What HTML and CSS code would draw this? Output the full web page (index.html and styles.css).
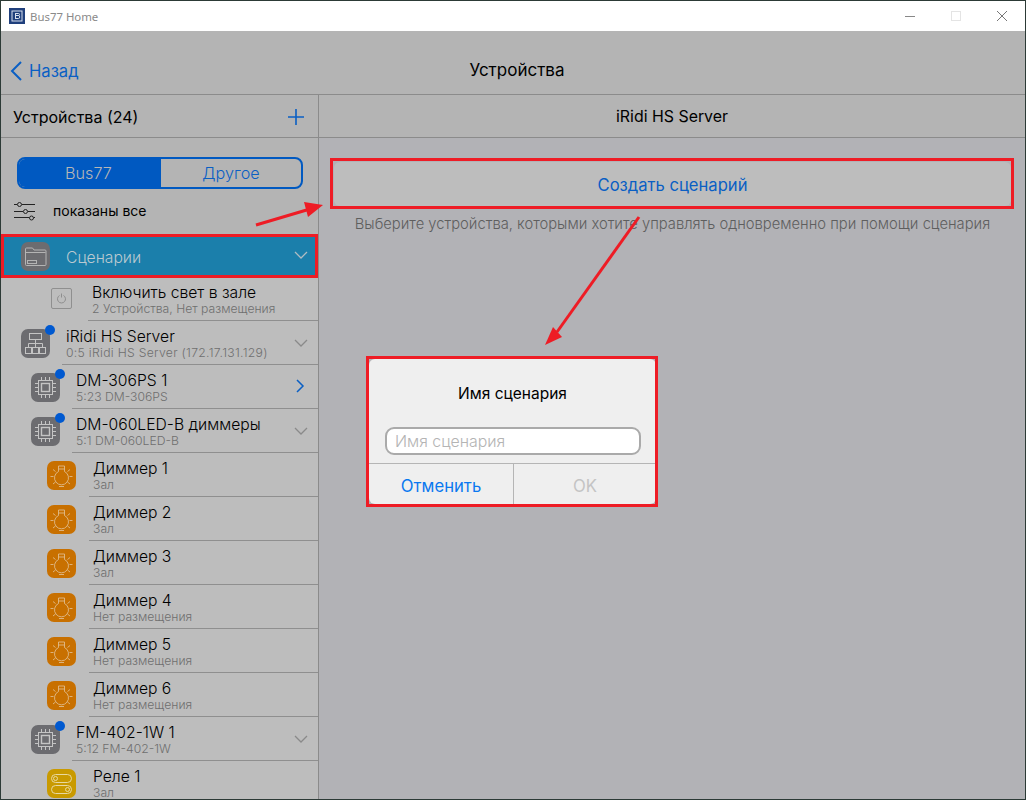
FILE: index.html
```html
<!DOCTYPE html>
<html lang="ru">
<head>
<meta charset="utf-8">
<title>Bus77 Home</title>
<link rel="stylesheet" href="styles.css">
</head>
<body>
<svg class="defs" width="0" height="0">
  <symbol id="i-chip" viewBox="0 0 29 29">
    <rect width="29" height="29" rx="7" fill="#6c6c70"/>
    <g fill="none" stroke="#c4c4c4">
      <rect x="7.500" y="7.500" width="14" height="14"/>
      <rect x="10.500" y="10.500" width="8" height="8" stroke-width="1.400"/>
      <path d="M10.500 4v3M14.500 4v3M18.500 4v3M10.500 22v3M14.500 22v3M18.500 22v3M4 10.500h3M4 14.500h3M4 18.500h3M22 10.500h3M22 14.500h3M22 18.500h3"/>
    </g>
  </symbol>
  <symbol id="i-net" viewBox="0 0 29 29">
    <rect width="29" height="29" rx="7" fill="#6c6c70"/>
    <g fill="none" stroke="#c4c4c4">
      <rect x="8.500" y="4.500" width="12" height="6"/>
      <rect x="4.500" y="18.500" width="6" height="6"/>
      <rect x="11.500" y="18.500" width="6" height="6"/>
      <rect x="18.500" y="18.500" width="6" height="6"/>
      <path d="M14.500 10.500v8M7.500 18.500v-4h14v4"/>
    </g>
  </symbol>
  <symbol id="i-folder" viewBox="0 0 29 29">
    <rect width="29" height="29" rx="7" fill="#6c6c70"/>
    <g fill="none" stroke="#b4b4b4">
      <path d="M4.500 22.500v-15.500q0-1 1-1h6l1.500 2h11q1 0 1 1v13.500q0 1-1 1h-18.500q-1 0-1-1z"/>
      <path d="M4.500 10.500h20"/>
      <rect x="6.500" y="18.500" width="9" height="3"/>
    </g>
  </symbol>
  <symbol id="i-bulb" viewBox="0 0 29 29">
    <rect width="29" height="29" rx="7" fill="#c87000"/>
    <g fill="none" stroke="#e2c49c" stroke-width="0.800">
      <path d="M11.500 10.500a7 7 0 1 0 6 0L17.500 5h-6z"/>
      <path d="M11.500 8h6M3.500 15.500h3M22.500 15.500h3M6 8.500l2.500 2M23 8.500l-2.500 2M6 23l2.500-2M23 23l-2.500-2M12 25.500h5"/>
    </g>
  </symbol>
  <symbol id="i-relay" viewBox="0 0 29 29">
    <rect width="29" height="29" rx="7" fill="#c99a00"/>
    <g fill="none" stroke="#e8d9a0">
      <rect x="4.500" y="5.500" width="20" height="8" rx="4"/>
      <rect x="4.500" y="16.500" width="20" height="8" rx="4"/>
      <circle cx="8.500" cy="9.500" r="2"/>
      <circle cx="20.500" cy="20.500" r="2"/>
    </g>
  </symbol>
  <symbol id="i-down" viewBox="0 0 14 8">
    <path d="M1 1l6 6 6-6" fill="none" stroke="currentColor" stroke-width="1.300"/>
  </symbol>
</svg>

<div class="window">
  <header class="titlebar">
    <svg class="app-icon" width="16" height="16" viewBox="0 0 16 16">
      <rect width="16" height="16" fill="#1f3f7c"/>
      <rect x="3" y="3" width="10" height="10" fill="none" stroke="#d8e0ee"/>
      <path d="M6.500 5.500h3q1 0 1 1t-1 1h-3zM6.500 7.500h3q1.200 0 1.200 1.500t-1.200 1.500h-3zM6.500 5v6" fill="none" stroke="#d8e0ee"/>
    </svg>
    <span class="app-name">Bus77 Home</span>
    <div class="win-controls">
      <span class="win-btn"><svg width="12" height="12" viewBox="0 0 12 12"><path d="M1 6.500h10" stroke="#888"/></svg></span>
      <span class="win-btn"><svg width="12" height="12" viewBox="0 0 12 12"><rect x="1.500" y="1.500" width="9" height="9" fill="none" stroke="#e4e4e4"/></svg></span>
      <span class="win-btn"><svg width="12" height="12" viewBox="0 0 12 12"><path d="M1 1l10 10M11 1L1 11" stroke="#777"/></svg></span>
    </div>
  </header>

  <nav class="navbar">
    <a class="back">
      <svg width="12" height="20" viewBox="0 0 12 20"><path d="M11 1L2 10l9 9" fill="none" stroke="#0a5fc4" stroke-width="2"/></svg>
      <span>Назад</span>
    </a>
    <div class="nav-title">Устройства</div>
  </nav>

  <div class="split">
    <aside class="sidebar">
      <div class="side-head">
        <span>Устройства (24)</span>
        <svg width="16" height="16" viewBox="0 0 16 16"><path d="M8 0v16M0 8h16" stroke="#0a5fc4" stroke-width="1.600"/></svg>
      </div>
      <div class="segmented">
        <div class="seg seg-on">Bus77</div>
        <div class="seg">Другое</div>
      </div>
      <div class="filter">
        <svg width="22" height="20" viewBox="0 0 22 20">
          <g fill="none" stroke="#222">
            <path d="M0 3.500h3M8 3.500h13M0 10.500h9M14 10.500h7M0 16.500h15M20 16.500h1"/>
            <circle cx="5.500" cy="3.500" r="2"/><circle cx="11.500" cy="10.500" r="2"/><circle cx="17.500" cy="17" r="2"/>
          </g>
        </svg>
        <span>показаны все</span>
      </div>
      <div class="list">
        <div class="row row-folder">
          <svg class="ic"><use href="#i-folder"/></svg>
          <div class="row-body"><div class="name">Сценарии</div></div>
          <svg class="chev"><use href="#i-down"/></svg>
        </div>
        <div class="row lvl-scene">
          <span class="power"><svg width="11" height="11" viewBox="0 0 11 11"><path d="M3.500 2.500a4 4 0 1 0 4 0M5.500 0.500v4" fill="none" stroke="#8e8e8e"/></svg></span>
          <div class="row-body"><div class="name">Включить свет в зале</div><div class="sub">2 Устройства, Нет размещения</div></div>
        </div>
        <div class="row lvl-0">
          <span class="ic-wrap"><svg class="ic"><use href="#i-net"/></svg><i class="dot"></i></span>
          <div class="row-body"><div class="name">iRidi HS Server</div><div class="sub sub-wide">0:5 iRidi HS Server (172.17.131.129)</div></div>
          <svg class="chev"><use href="#i-down"/></svg>
        </div>
        <div class="row lvl-1">
          <span class="ic-wrap"><svg class="ic"><use href="#i-chip"/></svg><i class="dot"></i></span>
          <div class="row-body"><div class="name">DM-306PS 1</div><div class="sub">5:23 DM-306PS</div></div>
          <svg class="chev-right" width="9" height="14" viewBox="0 0 9 14"><path d="M1 1l6 6-6 6" fill="none" stroke="#0a5fc4" stroke-width="1.500"/></svg>
        </div>
        <div class="row lvl-1">
          <span class="ic-wrap"><svg class="ic"><use href="#i-chip"/></svg><i class="dot"></i></span>
          <div class="row-body"><div class="name">DM-060LED-B диммеры</div><div class="sub">5:1 DM-060LED-B</div></div>
          <svg class="chev"><use href="#i-down"/></svg>
        </div>
        <div class="row lvl-2"><svg class="ic"><use href="#i-bulb"/></svg><div class="row-body"><div class="name">Диммер 1</div><div class="sub">Зал</div></div></div>
        <div class="row lvl-2"><svg class="ic"><use href="#i-bulb"/></svg><div class="row-body"><div class="name">Диммер 2</div><div class="sub">Зал</div></div></div>
        <div class="row lvl-2"><svg class="ic"><use href="#i-bulb"/></svg><div class="row-body"><div class="name">Диммер 3</div><div class="sub">Зал</div></div></div>
        <div class="row lvl-2"><svg class="ic"><use href="#i-bulb"/></svg><div class="row-body"><div class="name">Диммер 4</div><div class="sub">Нет размещения</div></div></div>
        <div class="row lvl-2"><svg class="ic"><use href="#i-bulb"/></svg><div class="row-body"><div class="name">Диммер 5</div><div class="sub">Нет размещения</div></div></div>
        <div class="row lvl-2"><svg class="ic"><use href="#i-bulb"/></svg><div class="row-body"><div class="name">Диммер 6</div><div class="sub">Нет размещения</div></div></div>
        <div class="row lvl-1">
          <span class="ic-wrap"><svg class="ic"><use href="#i-chip"/></svg><i class="dot"></i></span>
          <div class="row-body"><div class="name">FM-402-1W 1</div><div class="sub">5:12 FM-402-1W</div></div>
          <svg class="chev"><use href="#i-down"/></svg>
        </div>
        <div class="row lvl-2"><svg class="ic"><use href="#i-relay"/></svg><div class="row-body"><div class="name">Реле 1</div><div class="sub">Зал</div></div></div>
      </div>
    </aside>

    <main class="detail">
      <div class="detail-head">iRidi HS Server</div>
      <div class="detail-body">
        <div class="create">Создать сценарий</div>
        <p class="hint">Выберите устройства, которыми хотите управлять одновременно при помощи сценария</p>
        <div class="dialog">
          <div class="dialog-title">Имя сценария</div>
          <div class="dialog-input">Имя сценария</div>
          <div class="dialog-actions">
            <div class="act act-cancel">Отменить</div>
            <div class="act act-ok">OK</div>
          </div>
        </div>
      </div>
    </main>
  </div>

  <svg class="arrows" width="1024" height="799" viewBox="1 1 1024 799">
    <g stroke="#ee1c25" stroke-width="3" fill="#ee1c25">
      <path d="M256 225L310 209" fill="none"/>
      <path d="M323 205L304 202L308 217Z" stroke="none"/>
      <path d="M639 217L557 332" fill="none"/>
      <path d="M545 345L553 327L562 337Z" stroke="none"/>
    </g>
  </svg>
</div>
</body>
</html>
```
FILE: styles.css
```css
* { box-sizing: border-box; }
html, body { margin: 0; height: 100%; overflow: hidden; }
body {
  background: #2c3a36;
  padding: 1px;
  font-family: Inter, "Liberation Sans", Arial, sans-serif;
  font-weight: 300;
  color: #000;
}
.defs { position: absolute; }
.window {
  position: relative;
  width: 1024px;
  height: 798px;
  display: flex;
  flex-direction: column;
  overflow: hidden;
  background: #b2b2b6;
}
.titlebar {
  flex: 0 0 30px;
  background: #fff;
  display: flex;
  align-items: center;
  padding-left: 8px;
}
.app-icon { flex: none; }
.app-name {
  margin-left: 5px;
  font-family: "Noto Sans", sans-serif;
  font-weight: 400;
  font-size: 11.400px;
  color: #8a8a8a;
}
.win-controls { margin-left: auto; display: flex; }
.win-btn {
  width: 46px;
  height: 30px;
  display: flex;
  align-items: center;
  justify-content: center;
}
.navbar {
  flex: 0 0 64px;
  background: #b4b4b4;
  border-bottom: 1px solid #8b8b8b;
  position: relative;
  display: flex;
  align-items: center;
  justify-content: center;
  padding: 15px 0 0 8px;
}
.nav-title { font-size: 17px; font-weight: 400; }
.back {
  position: absolute;
  left: 9px;
  top: 30px;
  display: flex;
  align-items: center;
  gap: 7px;
  font-size: 16.600px;
  font-weight: 400;
  color: #0a5fc4;
}
.split { flex: 1; display: flex; min-height: 0; }
.sidebar {
  flex: 0 0 318px;
  background: #b4b4b4;
  border-right: 1px solid #8b8b8b;
  display: flex;
  flex-direction: column;
}
.side-head {
  flex: 0 0 43px;
  display: flex;
  align-items: center;
  justify-content: space-between;
  padding: 2px 14px 0 12px;
  border-bottom: 1px solid #8b8b8b;
  font-size: 16px;
  font-weight: 400;
}
.segmented {
  margin: 19px 15px 0 16px;
  height: 32px;
  border: 2px solid #0059c1;
  border-radius: 8px;
  display: flex;
  overflow: hidden;
  flex: none;
}
.seg {
  flex: 1;
  display: flex;
  align-items: center;
  justify-content: center;
  font-size: 16.200px;
  color: #0a5fc4;
}
.seg-on { background: #0059c1; color: #b6b6b6; flex: 0 0 142px; padding-right: 3px; }
.filter {
  flex: none;
  height: 45px;
  display: flex;
  align-items: center;
  gap: 17px;
  padding: 0 0 2px 13px;
  font-size: 14px;
  font-weight: 400;
}
.list { flex: 1; background: #bdbdbd; overflow: hidden; }
.row { height: 44px; display: flex; align-items: stretch; position: relative; }
.ic { width: 29px; height: 29px; flex: none; display: block; }
.ic-wrap { position: relative; flex: none; height: 29px; }
.dot {
  position: absolute;
  top: -4px;
  right: -5px;
  width: 10px;
  height: 10px;
  border-radius: 50%;
  background: #0059d0;
}
.row > .ic, .row > .ic-wrap, .row > .power { margin-top: 8px; }
.row-body {
  flex: 1;
  margin-left: 12px;
  padding: 7px 0 0 4px;
  border-bottom: 1px solid #8f8f8f;
  min-width: 0;
}
.name { font-size: 15.700px; line-height: 17px; white-space: nowrap; }
.sub { font-size: 12.200px; line-height: 15px; color: #6f6f6f; white-space: nowrap; }
.sub-wide { letter-spacing: 0.300px; }
.chev {
  position: absolute;
  right: 10px;
  top: 18px;
  width: 14px;
  height: 8px;
  color: #8a8a8a;
}
.chev-right { position: absolute; right: 13px; top: 14px; }
.row-folder {
  background: #1b7fab;
  margin-bottom: -1px;
  padding-left: 20px;
  outline: 3px solid #ee1c25;
  outline-offset: -3px;
  z-index: 1;
}
.row-folder .row-body { border: 0; padding: 15px 0 0 4px; }
.row-folder .name { color: #bac9d0; }
.row-folder .chev { top: 17px; color: #b0bcc2; }
.lvl-scene { padding-left: 50px; }
.lvl-scene .row-body { margin-left: 16px; }
.power {
  flex: none;
  width: 21px;
  height: 21px;
  margin-top: 11px !important;
  border: 1px solid #8f8f8f;
  border-radius: 2px;
  display: flex;
  align-items: center;
  justify-content: center;
}
.lvl-0 { padding-left: 20px; }
.lvl-1 { padding-left: 30px; }
.lvl-2 { padding-left: 46px; }
.lvl-2 .row-body { margin-left: 13px; }
.detail { flex: 1; display: flex; flex-direction: column; min-width: 0; }
.detail-head {
  flex: 0 0 43px;
  background: #b4b4b4;
  border-bottom: 1px solid #8b8b8b;
  display: flex;
  align-items: center;
  justify-content: center;
  font-size: 15.900px;
  font-weight: 400;
}
.detail-body {
  flex: 1;
  position: relative;
  background: #b2b2b6;
  padding: 24px 14px 0 15px;
}
.create {
  position: relative;
  height: 44px;
  padding-top: 1px;
  background: #bdbdbd;
  border-radius: 6px;
  display: flex;
  align-items: center;
  justify-content: center;
  font-size: 16.600px;
  font-weight: 400;
  color: #0a5fc4;
}
.create::after {
  content: "";
  position: absolute;
  inset: -4px -3px -3px -4px;
  border: 3px solid #ee1c25;
}
.hint {
  margin: 9px 0 0;
  text-align: center;
  font-size: 14.760px;
  line-height: 18px;
  color: #5e5e5e;
  white-space: nowrap;
}
.dialog {
  position: absolute;
  left: 50px;
  top: 221px;
  width: 287px;
  height: 145px;
  background: #efefef;
  border-radius: 6px;
  display: flex;
  flex-direction: column;
}
.dialog::after {
  content: "";
  position: absolute;
  inset: -3px -2px -3px -3px;
  border: 3px solid #ee1c25;
  pointer-events: none;
}
.dialog-title { text-align: center; font-size: 15.500px; font-weight: 400; line-height: 20px; margin-top: 25px; }
.dialog-input {
  margin: 23px 15px 0 16px;
  height: 28px;
  border: 2px solid #aaa;
  border-radius: 9px;
  background: #fff;
  font-size: 15.900px;
  line-height: 26px;
  padding-left: 8px;
  color: #b4b4b4;
}
.dialog-actions {
  margin-top: 8px;
  flex: 1;
  display: flex;
  border-top: 1px solid #b5b5b5;
}
.act {
  flex: 1;
  display: flex;
  align-items: center;
  justify-content: center;
  font-size: 16.700px;
  font-weight: 400;
  padding-top: 4px;
}
.act-cancel { color: #0a78f0; border-right: 1px solid #b5b5b5; flex: 0 0 145px; }
.act-ok { color: #c4c4c4; }
.arrows { position: absolute; left: 0; top: 0; pointer-events: none; z-index: 5; }
```
